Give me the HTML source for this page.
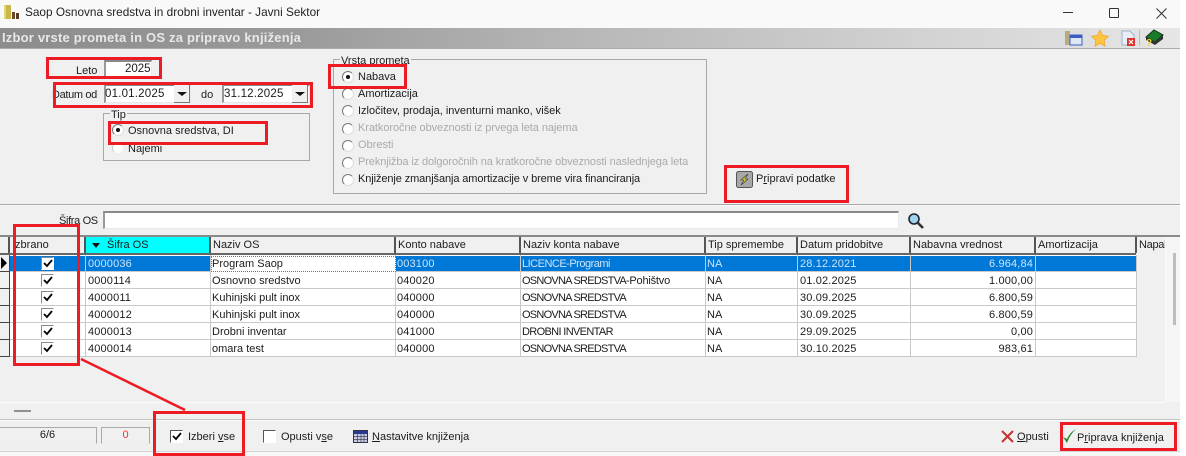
<!DOCTYPE html>
<html><head><meta charset="utf-8"><style>
html,body{margin:0;padding:0;background:#fff}
#p{position:relative;width:1186px;height:456px;overflow:hidden;background:#fff;font:11px/14px "Liberation Sans",sans-serif;color:#1c1c1c}
#a{position:absolute;left:0;top:0;width:1180px;height:456px;background:#f0f0f0;overflow:hidden;filter:blur(.35px)}
#a div,#a span,#a svg{position:absolute;white-space:nowrap}
i{font-style:normal}
.t{height:14px}
.r{width:10px;height:10px;border-radius:50%;background:#fff;border:1px solid #777;border-right-color:#ddd;border-bottom-color:#ddd}
.d{color:#aaa}
.box{border:1px solid #a8a8a8;background:#f0f0f0}
.in{background:#fff;border-top:2px solid #888;border-left:2px solid #999;border-right:1px solid #e8e8e8;border-bottom:1px solid #e8e8e8}
.red{border:3px solid #ed1c24;box-sizing:border-box;z-index:5}
.h{top:237px;height:16px;background:#f0f0f0;border-right:2px solid #555;box-sizing:border-box;padding:1px 0 0 2px}
.v{top:255px;width:1px;height:102px;background:#c9c9c9}
.l{left:10px;width:1126px;height:1px;background:#c9c9c9}
.c{width:13px;height:13px;background:#fff;left:41px}
.n{letter-spacing:.15px}
.s{color:#cfe4f7}
.o{letter-spacing:-.75px}
u{text-decoration:underline}
</style></head><body><div id="p"><div id="a">
<!-- title bar -->
<div style="left:0;top:0;width:1180px;height:28px;background:#f9f9f9"></div>
<svg style="left:4px;top:5px" width="16" height="15" viewBox="0 0 16 15"><rect x="0" y="0" width="7" height="14" fill="#c8b84a"/><rect x="0" y="0" width="2" height="14" fill="#e2d67a"/><rect x="8" y="7" width="3" height="7" fill="#6b4a2a"/><rect x="12" y="8" width="3" height="6" fill="#5a3a20"/></svg>
<div class="t" style="left:25px;top:5px;font-size:11.8px;line-height:15px;color:#222">Saop Osnovna sredstva in drobni inventar - Javni Sektor</div>
<div style="left:1063px;top:12px;width:10px;height:1px;background:#333"></div>
<div style="left:1109px;top:8px;width:8px;height:8px;border:1px solid #333;border-radius:1px"></div>
<svg style="left:1156px;top:8px" width="11" height="11" viewBox="0 0 11 11"><path d="M.5.5l10 10M10.5.5l-10 10" stroke="#333" fill="none"/></svg>
<!-- grey header -->
<div style="left:0;top:28px;width:1180px;height:20px;background:linear-gradient(90deg,#8c8c8c 0,#9a9a9a 25%,#b8b8b8 50%,#d4d4d4 80%,#e6e6e6 100%);border-bottom:1px solid #aaa"></div>
<div class="t" style="left:2px;top:31px;font-weight:bold;font-size:13px;letter-spacing:.2px;color:#e8e8e8">Izbor vrste prometa in OS za pripravo knjiženja</div>
<svg style="left:1065px;top:29px" width="106" height="18" viewBox="0 0 106 18">
<rect x="0" y="2" width="5" height="14" fill="#b8ab80"/><rect x="5" y="6" width="12" height="10" fill="#dfe6f5" stroke="#3a5fc0"/><rect x="5" y="6" width="12" height="3" fill="#3a5fc0"/>
<path d="M35 1l2.6 5.400 5.900.8-4.300 4.100 1 5.900-5.200-2.800-5.200 2.800 1-5.900-4.300-4.100 5.900-.8z" fill="#fdc63f" stroke="#f0a030" stroke-width=".7"/>
<path d="M57 2h8l4 4v10H57z" fill="#e8eef8" stroke="#9fb0c8"/><rect x="62" y="9" width="8" height="8" fill="#d9332b"/><path d="M64 11l4 4M68 11l-4 4" stroke="#fff" stroke-width="1.2"/>
<rect x="74" y="1" width="1" height="16" fill="#bbb"/>
<path d="M81 8l8-7 9 5-8 7z" fill="#1c7a2c" stroke="#0c3a14"/><path d="M81 8v3l9 5 8-6V6l-8 7z" fill="#333"/><text x="81" y="17" font-size="10" font-weight="bold" fill="#e8d020" font-family="Liberation Sans">?</text>
</svg>
<!-- left form -->
<div class="t" style="left:76px;top:64px">Leto</div>
<div class="in" style="left:104px;top:60px;width:45px;height:15px"></div>
<div class="t" style="left:125px;top:62px;font-size:11.5px">2025</div>
<div class="t" style="left:52px;top:88px;letter-spacing:-.35px">Datum od</div>
<div class="in" style="left:104px;top:84px;width:84px;height:16px"></div>
<div class="t" style="left:105px;top:87px;font-size:11.5px;letter-spacing:.2px">01.01.2025</div>
<div style="left:174px;top:85px;width:15px;height:17px;background:#f0f0f0;border-right:1px solid #777;border-bottom:1px solid #777"></div>
<div style="left:177px;top:92px;border:5px solid transparent;border-top:4px solid #111;border-bottom:0"></div>
<div class="t" style="left:201px;top:88px">do</div>
<div class="in" style="left:222px;top:84px;width:85px;height:16px"></div>
<div class="t" style="left:224px;top:87px;font-size:11.5px;letter-spacing:.2px">31.12.2025</div>
<div style="left:292px;top:85px;width:15px;height:17px;background:#f0f0f0;border-right:1px solid #777;border-bottom:1px solid #777"></div>
<div style="left:295px;top:92px;border:5px solid transparent;border-top:4px solid #111;border-bottom:0"></div>
<!-- Tip -->
<div class="box" style="left:103px;top:113px;width:205px;height:46px"></div>
<div class="t" style="left:110px;top:108px;background:#f0f0f0;padding:0 1px">Tip</div>
<div class="r" style="left:112px;top:124px"></div><div style="left:116px;top:128px;width:4px;height:4px;border-radius:50%;background:#111"></div>
<div class="t" style="left:128px;top:124px">Osnovna sredstva, DI</div>
<div class="r" style="left:112px;top:142px;border-color:#ccc #eee #eee #ccc"></div>
<div class="t" style="left:128px;top:142px">Najemi</div>
<!-- Vrsta prometa -->
<div class="box" style="left:333px;top:59px;width:372px;height:133px"></div>
<div class="t" style="left:340px;top:54px;background:#f0f0f0;padding:0 1px">Vrsta prometa</div>
<div class="r" style="left:342px;top:71px"></div><div style="left:346px;top:75px;width:4px;height:4px;border-radius:50%;background:#111"></div>
<div class="t" style="left:358px;top:70px">Nabava</div>
<div class="r" style="left:342px;top:88px"></div>
<div class="t" style="left:358px;top:87px">Amortizacija</div>
<div class="r" style="left:342px;top:105px"></div>
<div class="t" style="left:358px;top:104px">Izločitev, prodaja, inventurni manko, višek</div>
<div class="r" style="left:342px;top:123px"></div>
<div class="t d" style="left:358px;top:121px;letter-spacing:-.07px">Kratkoročne obveznosti iz prvega leta najema</div>
<div class="r" style="left:342px;top:140px"></div>
<div class="t d" style="left:358px;top:138px">Obresti</div>
<div class="r" style="left:342px;top:157px"></div>
<div class="t d" style="left:358px;top:155px;letter-spacing:-.1px">Preknjižba iz dolgoročnih na kratkoročne obveznosti naslednjega leta</div>
<div class="r" style="left:342px;top:174px"></div>
<div class="t" style="left:358px;top:172px;letter-spacing:-.1px">Knjiženje zmanjšanja amortizacije v breme vira financiranja</div>
<!-- Pripravi -->
<svg style="left:736px;top:171px" width="17" height="17" viewBox="0 0 17 17"><rect x=".5" y=".5" width="16" height="16" rx="2" fill="#a8a8a8" stroke="#555"/><path d="M12 3L5 9h3l-3 5 7-6H9z" fill="#e6dc30" stroke="#333" stroke-width=".6"/></svg>
<div class="t" style="left:756px;top:172px">P<u>r</u>ipravi podatke</div>
<!-- separators -->
<div style="left:0;top:204px;width:1180px;height:1px;background:#a8a8a8"></div>
<div style="left:0;top:205px;width:1180px;height:1px;background:#fafafa"></div>
<div class="t" style="left:59px;top:214px;letter-spacing:-.35px">Šifra OS</div>
<div class="in" style="left:103px;top:211px;width:793px;height:15px"></div>
<svg style="left:907px;top:212px" width="18" height="18" viewBox="0 0 18 18"><circle cx="7" cy="7" r="5" fill="#9fd4ea" stroke="#223" stroke-width="1.6"/><path d="M11 11l5 5" stroke="#333" stroke-width="2.600"/></svg>
<!-- grid -->
<div style="left:0;top:235px;width:1180px;height:2px;background:#8a8a8a"></div>
<div style="left:0;top:253px;width:1136px;height:2px;background:#666"></div>
<div style="left:0;top:255px;width:1165px;height:102px;background:#fff"></div>
<div style="left:0;top:255px;width:9px;height:102px;background:#f0f0f0;border-right:1px solid #444"></div>
<div style="left:1136px;top:237px;width:29px;height:120px;background:#f0f0f0"></div>
<div style="left:1165px;top:237px;width:15px;height:165px;background:#f5f5f5"></div>
<div style="left:1173px;top:253px;width:3px;height:72px;background:#bdbdbd"></div>
<div class="h" style="left:0;width:10px"></div>
<div class="h" style="left:10px;width:76px">Izbrano</div>
<div class="h" style="left:86px;width:125px;background:#00ffff;padding-left:21px">Šifra OS</div>
<div style="left:92px;top:243px;border:4.5px solid transparent;border-top:5px solid #111;border-bottom:0"></div>
<div class="h" style="left:211px;width:185px">Naziv OS</div>
<div class="h" style="left:396px;width:125px">Konto nabave</div>
<div class="h" style="left:521px;width:185px">Naziv konta nabave</div>
<div class="h" style="left:706px;width:92px">Tip spremembe</div>
<div class="h" style="left:798px;width:113px">Datum pridobitve</div>
<div class="h" style="left:911px;width:125px">Nabavna vrednost</div>
<div class="h" style="left:1036px;width:101px">Amortizacija</div>
<div class="h" style="left:1137px;width:29px;border:0;letter-spacing:-.3px">Napal</div>
<div style="left:10px;top:256px;width:1126px;height:15px;background:#0078d7"></div>
<div class="l" style="top:271px"></div><div class="l" style="top:288px"></div><div class="l" style="top:305px"></div><div class="l" style="top:322px"></div><div class="l" style="top:339px"></div><div class="l" style="top:356px"></div>
<div style="left:0;top:271px;width:9px;height:1px;background:#444"></div><div style="left:0;top:288px;width:9px;height:1px;background:#444"></div><div style="left:0;top:305px;width:9px;height:1px;background:#444"></div><div style="left:0;top:322px;width:9px;height:1px;background:#444"></div><div style="left:0;top:339px;width:9px;height:1px;background:#444"></div><div style="left:0;top:356px;width:9px;height:1px;background:#444"></div>
<div class="v" style="left:85px"></div><div class="v" style="left:210px"></div><div class="v" style="left:395px"></div><div class="v" style="left:520px"></div><div class="v" style="left:705px"></div><div class="v" style="left:797px"></div><div class="v" style="left:910px"></div><div class="v" style="left:1035px"></div><div class="v" style="left:1136px"></div>
<svg style="left:0;top:257px" width="8" height="12" viewBox="0 0 8 12"><path d="M1 0l6 6-6 6z" fill="#000"/></svg>
<div style="left:211px;top:256px;width:183px;height:14px;background:#fff;border:1px dotted #9a6a30"></div>
<!-- checks -->
<div class="c" style="top:257px"></div><div class="c" style="top:274px"></div><div class="c" style="top:291px"></div><div class="c" style="top:308px"></div><div class="c" style="top:325px"></div><div class="c" style="top:342px"></div>
<svg style="left:41px;top:257px" width="13" height="100" viewBox="0 0 13 100"><g fill="none" stroke="#8a8a8a" stroke-width="1"><path d="M.5 12.500V.5h12"/><path d="M.5 29.500v-12h12"/><path d="M.5 46.500v-12h12"/><path d="M.5 63.500v-12h12"/><path d="M.5 80.500v-12h12"/><path d="M.5 97.500v-12h12"/></g><g fill="none" stroke="#000" stroke-width="1.800"><path d="M3 6l3 3 5-6"/><path d="M3 23l3 3 5-6"/><path d="M3 40l3 3 5-6"/><path d="M3 57l3 3 5-6"/><path d="M3 74l3 3 5-6"/><path d="M3 91l3 3 5-6"/></g></svg>
<!-- row text -->
<div class="t n s" style="left:88px;top:257px">0000036</div><div class="t" style="left:212px;top:257px">Program Saop</div><div class="t n s" style="left:397px;top:257px">003100</div><div class="t s" style="left:522px;top:257px;letter-spacing:-.5px">LICENCE-Programi</div><div class="t s" style="left:707px;top:257px">NA</div><div class="t n s" style="left:800px;top:257px">28.12.2021</div><div class="t n s" style="right:147px;top:257px">6.964,84</div>
<div class="t n" style="left:88px;top:274px">0000114</div><div class="t" style="left:212px;top:274px">Osnovno sredstvo</div><div class="t n" style="left:397px;top:274px">040020</div><div class="t o" style="left:522px;top:274px">OSNOVNA SREDSTVA<i style="letter-spacing:-.2px">-Pohištvo</i></div><div class="t" style="left:707px;top:274px">NA</div><div class="t n" style="left:800px;top:274px">01.02.2025</div><div class="t n" style="right:147px;top:274px">1.000,00</div>
<div class="t n" style="left:88px;top:291px">4000011</div><div class="t" style="left:212px;top:291px">Kuhinjski pult inox</div><div class="t n" style="left:397px;top:291px">040000</div><div class="t o" style="left:522px;top:291px">OSNOVNA SREDSTVA</div><div class="t" style="left:707px;top:291px">NA</div><div class="t n" style="left:800px;top:291px">30.09.2025</div><div class="t n" style="right:147px;top:291px">6.800,59</div>
<div class="t n" style="left:88px;top:308px">4000012</div><div class="t" style="left:212px;top:308px">Kuhinjski pult inox</div><div class="t n" style="left:397px;top:308px">040000</div><div class="t o" style="left:522px;top:308px">OSNOVNA SREDSTVA</div><div class="t" style="left:707px;top:308px">NA</div><div class="t n" style="left:800px;top:308px">30.09.2025</div><div class="t n" style="right:147px;top:308px">6.800,59</div>
<div class="t n" style="left:88px;top:325px">4000013</div><div class="t" style="left:212px;top:325px">Drobni inventar</div><div class="t n" style="left:397px;top:325px">041000</div><div class="t" style="left:522px;top:325px;letter-spacing:-.65px">DROBNI INVENTAR</div><div class="t" style="left:707px;top:325px">NA</div><div class="t n" style="left:800px;top:325px">29.09.2025</div><div class="t n" style="right:147px;top:325px">0,00</div>
<div class="t n" style="left:88px;top:342px">4000014</div><div class="t" style="left:212px;top:342px">omara test</div><div class="t n" style="left:397px;top:342px">040000</div><div class="t o" style="left:522px;top:342px">OSNOVNA SREDSTVA</div><div class="t" style="left:707px;top:342px">NA</div><div class="t n" style="left:800px;top:342px">30.10.2025</div><div class="t n" style="right:147px;top:342px">983,61</div>
<!-- bottom -->
<div style="left:0;top:402px;width:1165px;height:1px;background:#fafafa"></div>
<div style="left:1165px;top:237px;width:1px;height:165px;background:#fafafa"></div>
<div style="left:14px;top:410px;width:17px;height:2px;background:#909090"></div>
<div style="left:0;top:419px;width:1180px;height:1px;background:#c4c4c4"></div>
<div style="left:0;top:420px;width:1180px;height:1px;background:#fafafa"></div>
<div style="left:-2px;top:427px;width:97px;height:15px;border:1px solid #aaa;border-bottom-color:#eee;text-align:center;line-height:15px">6/6</div>
<div style="left:101px;top:427px;width:47px;height:15px;border:1px solid #aaa;border-bottom-color:#eee;text-align:center;line-height:15px;color:#f03030">0</div>
<svg style="left:170px;top:430px" width="13" height="13" viewBox="0 0 13 13"><rect width="13" height="13" fill="#fff"/><path d="M.5 12.500V.5h12" fill="none" stroke="#555"/><path d="M3 6l3 3 5-6" fill="none" stroke="#000" stroke-width="1.800"/></svg>
<div class="t" style="left:188px;top:430px">Izberi <u>v</u>se</div>
<svg style="left:263px;top:430px" width="13" height="13" viewBox="0 0 13 13"><rect width="13" height="13" fill="#fff"/><path d="M.5 12.500V.5h12" fill="none" stroke="#555"/></svg>
<div class="t" style="left:281px;top:430px">Opusti v<u>s</u>e</div>
<svg style="left:353px;top:430px" width="15" height="13" viewBox="0 0 15 13"><rect x=".5" y=".5" width="14" height="12" fill="#c8cce8" stroke="#334"/><rect x="1" y="1" width="13" height="3" fill="#2a3a90"/><path d="M1 6.500h13M1 9.500h13M4.500 4v8M8 4v8M11 4v8" stroke="#445" stroke-width=".7"/></svg>
<div class="t" style="left:372px;top:430px"><u>N</u>astavitve knjiženja</div>
<svg style="left:1001px;top:430px" width="13" height="13" viewBox="0 0 13 13"><path d="M1 1l11 11M12 1L1 12" stroke="#c8302a" stroke-width="2" fill="none"/></svg>
<div class="t" style="left:1017px;top:430px"><u>O</u>pusti</div>
<svg style="left:1062px;top:428px" width="15" height="16" viewBox="0 0 15 16"><path d="M1 9l4 6C7 9 10 5 14 1 9 4 7 7 5 11z" fill="#1b8a2a"/></svg>
<div class="t" style="left:1077px;top:431px">P<u>r</u>iprava knjiženja</div>
<div style="left:0;top:451px;width:1180px;height:1px;background:#d4d4d4"></div>
<div style="left:0;top:452px;width:1180px;height:4px;background:#f7f7f7"></div>
<!-- red annotations -->
<div class="red" style="left:46px;top:57px;width:116px;height:22px"></div>
<div class="red" style="left:53px;top:82px;width:260px;height:26px"></div>
<div class="red" style="left:108px;top:121px;width:160px;height:24px"></div>
<div class="red" style="left:328px;top:64px;width:79px;height:25px"></div>
<div class="red" style="left:724px;top:165px;width:125px;height:38px"></div>
<div class="red" style="left:13px;top:224px;width:67px;height:142px"></div>
<div class="red" style="left:153px;top:411px;width:92px;height:45px"></div>
<div class="red" style="left:1060px;top:422px;width:117px;height:29px"></div>
<svg style="left:78px;top:356px;z-index:5" width="110" height="56" viewBox="0 0 110 56"><path d="M3 3L107 54" stroke="#ed1c24" stroke-width="2.500" fill="none"/></svg>
</div></div></body></html>
